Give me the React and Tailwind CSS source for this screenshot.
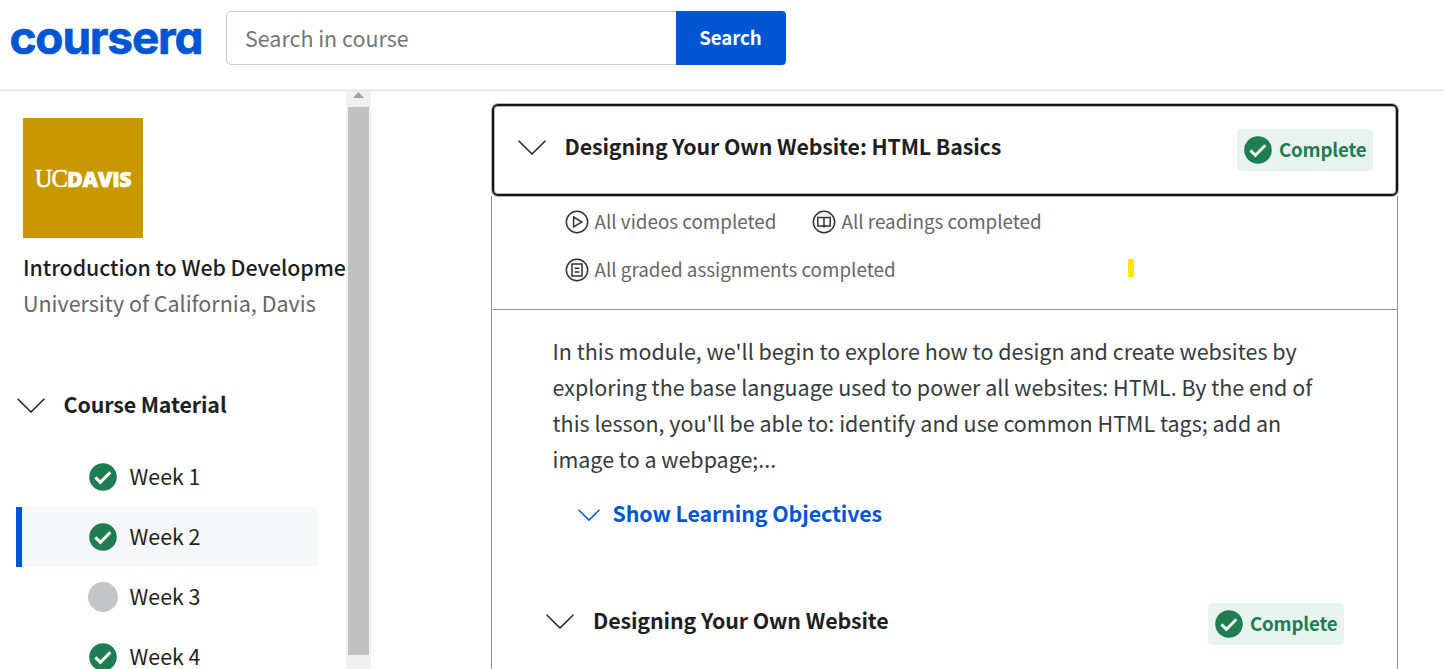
import React from "react";

function Chevron({ className, stroke = 1.5 }) {
  return (
    <svg viewBox="0 0 28 15" fill="none" stroke="currentColor" strokeWidth={stroke} className={className}>
      <path d="M0.6 0.8 L14 14 L27.4 0.8" />
    </svg>
  );
}

function CheckCircle({ className, mark = "#ffffff" }) {
  return (
    <svg viewBox="0 0 28 28" className={className}>
      <circle cx="14" cy="14" r="13.8" fill="#1f7d52" />
      <path d="M6.4 14.4 L11.4 19.3 L21.4 9.3" fill="none" stroke={mark} strokeWidth="3" />
    </svg>
  );
}

function VideoIcon() {
  return (
    <svg viewBox="0 0 24 24" fill="none" stroke="#333333" strokeWidth="1.5" className="size-6 shrink-0">
      <circle cx="12" cy="12" r="10.7" />
      <path d="M8.6 7 L16.9 12 L8.6 17 Z" />
    </svg>
  );
}

function ReadingIcon() {
  return (
    <svg viewBox="0 0 24 24" fill="none" stroke="#333333" strokeWidth="1.5" className="size-6 shrink-0">
      <circle cx="12" cy="12" r="10.7" />
      <path d="M12 17.8 V8.2 L11 7.6 H5.8 V16 H11 L12 16.6 L13 16 H18.2 V7.6 H13 L12 8.2" />
    </svg>
  );
}

function AssignmentIcon() {
  return (
    <svg viewBox="0 0 24 24" fill="none" stroke="#333333" strokeWidth="1.5" className="size-6 shrink-0">
      <circle cx="12" cy="12" r="10.7" />
      <path d="M7 6 H17 V18 H7 Z M9.6 10.3 H14.4 M9.6 14 H14.4" />
    </svg>
  );
}

function CompleteBadge() {
  return (
    <div className="flex h-[42px] w-[136px] items-center rounded-[5px] bg-[#e8f2ee] pl-[7px]">
      <CheckCircle className="size-7 shrink-0" mark="#e8f2ee" />
      <span className="ml-[7px] pb-[2px] text-[18.7px] leading-[36px] font-bold tracking-[-0.18px] text-[#1f7d52]">
        Complete
      </span>
    </div>
  );
}

function Status({ icon, children }) {
  return (
    <div className="flex h-12 items-center gap-[5.5px]">
      {icon}
      <span className="pb-[2px] text-[18.82px] leading-[30px] whitespace-nowrap text-[#666666]">{children}</span>
    </div>
  );
}

const weeks = [
  { label: "Week 1", done: true },
  { label: "Week 2", done: true, selected: true },
  { label: "Week 3", done: false },
  { label: "Week 4", done: true },
];

function Header() {
  return (
    <header className="flex h-[91px] shrink-0 border-b border-[#e0e0e0] shadow-[inset_0_-1px_0_#f1f1f1]">
      <div className="flex h-[54px] w-[226px] shrink-0 pt-[9px] pl-[9.5px]">
        <span className="text-[46px] leading-[56px] font-bold tracking-[-1.2px] whitespace-nowrap text-[#0056d2] font-['Inter',sans-serif] [font-feature-settings:'cv11'] [-webkit-text-stroke:0.7px_#0056d2]">
          coursera
        </span>
      </div>
      <div className="mt-[11px] flex h-[54px]">
        <div className="flex w-[450px] items-center rounded-l-[5px] border border-r-0 border-[#c9cdd8] pl-[18px]">
          <span className="pb-[1px] text-[21.45px] leading-[36px] text-[#757575]">Search in course</span>
        </div>
        <div className="flex w-[110px] items-center justify-center rounded-r-[4px] bg-[#0056d2] pr-[1px] pb-[2px] text-[18.7px] font-bold tracking-[-0.1px] text-white">
          Search
        </div>
      </div>
    </header>
  );
}

function Sidebar() {
  return (
    <aside className="flex h-full w-[371px] shrink-0">
      <div className="flex w-[346px] flex-col overflow-hidden pt-[27px]">
        <div className="ml-[23px] flex size-[120px] shrink-0 items-center justify-center bg-[#c99700] pt-[1px] text-white">
          <span className="text-[24.5px] leading-[24px] tracking-[-0.8px] font-['Liberation_Serif',serif] [-webkit-text-stroke:0.5px_#ffffff]">
            UC
          </span>
          <span className="text-[21.5px] leading-[24px] font-extrabold tracking-[-0.4px] font-['Open_Sans',sans-serif] [-webkit-text-stroke:0.6px_#ffffff]">
            DAVIS
          </span>
        </div>
        <div className="mt-[11px] ml-[23px] shrink-0 text-[21.4px] leading-[36px] font-medium tracking-[-0.08px] whitespace-nowrap text-[#1f1f1f]">
          Introduction to Web Developme
        </div>
        <div className="ml-[23px] shrink-0 text-[21.5px] leading-[36px] whitespace-nowrap text-[#666666]">
          University of California, Davis
        </div>
        <div className="mt-[66px] flex h-[36px] shrink-0 items-center pl-[17px] text-[#1f1f1f]">
          <Chevron className="mt-[1px] h-[15px] w-7" />
          <span className="ml-[18.5px] pb-[2px] text-[21.4px] leading-[36px] font-bold tracking-[-0.12px]">
            Course Material
          </span>
        </div>
        <nav className="mt-6 ml-4 flex w-[302px] shrink-0 flex-col">
          {weeks.map((w) => (
            <div
              key={w.label}
              className={
                w.selected
                  ? "flex h-[60px] shrink-0 items-center rounded-r-[5px] border-l-[6px] border-[#0056d2] bg-[#f5f7f8] pl-[66px]"
                  : "flex h-[60px] shrink-0 items-center border-l-[6px] border-transparent pl-[66px]"
              }
            >
              <span className="flex size-[30px] items-center justify-center">
                {w.done ? (
                  <CheckCircle className="size-7" />
                ) : (
                  <span className="size-[30px] rounded-full bg-[#c4c5c7]" />
                )}
              </span>
              <span className="ml-[11.5px] pb-[2px] text-[21.4px] leading-[36px] text-[#1f1f1f]">{w.label}</span>
            </div>
          ))}
        </nav>
      </div>
      <div className="flex w-[25px] flex-col items-center bg-[#f0f0f0]">
        <svg viewBox="0 0 11 6" className="mt-[1px] h-[6px] w-[11px] shrink-0">
          <path d="M0 6 L5.5 0 L11 6 Z" fill="#a0a0a0" />
        </svg>
        <div className="mt-[9px] h-[548px] w-[21px] bg-[#c1c1c1]" />
      </div>
    </aside>
  );
}

function Main() {
  return (
    <main className="flex flex-1 flex-col pt-[13px] pl-[120px]">
      <section className="flex w-[907px] flex-1 flex-col">
        <div className="ml-[1px] flex h-[92px] shrink-0 items-center rounded-[6px] border-2 border-[#141414] pr-[23px] pl-[24px] shadow-[0_0_0_1px_#b4b6b4,inset_0_0_0_1px_#b4b6b4]">
          <Chevron className="mb-[5px] h-[15px] w-7 text-[#1f1f1f]" />
          <h2 className="ml-[18.5px] flex-1 pb-[8px] text-[21.4px] leading-[36px] font-bold tracking-[-0.13px] text-[#1f1f1f]">
            Designing Your Own Website: HTML Basics
          </h2>
          <CompleteBadge />
        </div>
        <div className="flex flex-1 flex-col border-x border-[#8f8f93]">
          <div className="ml-[1px] flex h-[114px] flex-col border-b border-[#8f8f93] pt-[2px] pl-[72px]">
            <div className="flex">
              <div className="w-[247px]">
                <Status icon={<VideoIcon />}>All videos completed</Status>
              </div>
              <Status icon={<ReadingIcon />}>All readings completed</Status>
            </div>
            <div className="flex items-center">
              <Status icon={<AssignmentIcon />}>All graded assignments completed</Status>
              <span className="mb-[4px] ml-[232.5px] h-[18px] w-[6px] bg-[#ffe600]" />
            </div>
          </div>
          <p className="mt-[23px] pl-[60.5px] text-[21.48px] leading-[36px] whitespace-nowrap text-[#373a3c]">
            In this module, we'll begin to explore how to design and create websites by
            <br />
            exploring the base language used to power all websites: HTML. By the end of
            <br />
            this lesson, you'll be able to: identify and use common HTML tags; add an
            <br />
            image to a webpage;...
          </p>
          <div className="mt-[19px] flex h-[36px] items-center pl-[86px] text-[#0056d2]">
            <Chevron className="mt-[2px] h-[12px] w-[22px]" stroke={2} />
            <span className="ml-[12.5px] pb-[2px] text-[21.4px] leading-[36px] font-bold tracking-[-0.11px]">
              Show Learning Objectives
            </span>
          </div>
          <div className="mt-[71px] flex h-[42px] shrink-0 items-center pr-[53px] pl-[54px] text-[#1f1f1f]">
            <Chevron className="mb-[5px] h-[15px] w-7" />
            <h2 className="ml-[19px] flex-1 pb-[8px] text-[21.4px] leading-[36px] font-bold tracking-[-0.12px]">
              Designing Your Own Website
            </h2>
            <CompleteBadge />
          </div>
        </div>
      </section>
    </main>
  );
}

export default function App() {
  return (
    <div className="flex h-[669px] w-[1444px] flex-col overflow-hidden bg-white font-['Noto_Sans_CJK_SC',sans-serif]">
      <Header />
      <div className="flex h-[578px] overflow-hidden">
        <Sidebar />
        <Main />
      </div>
    </div>
  );
}
